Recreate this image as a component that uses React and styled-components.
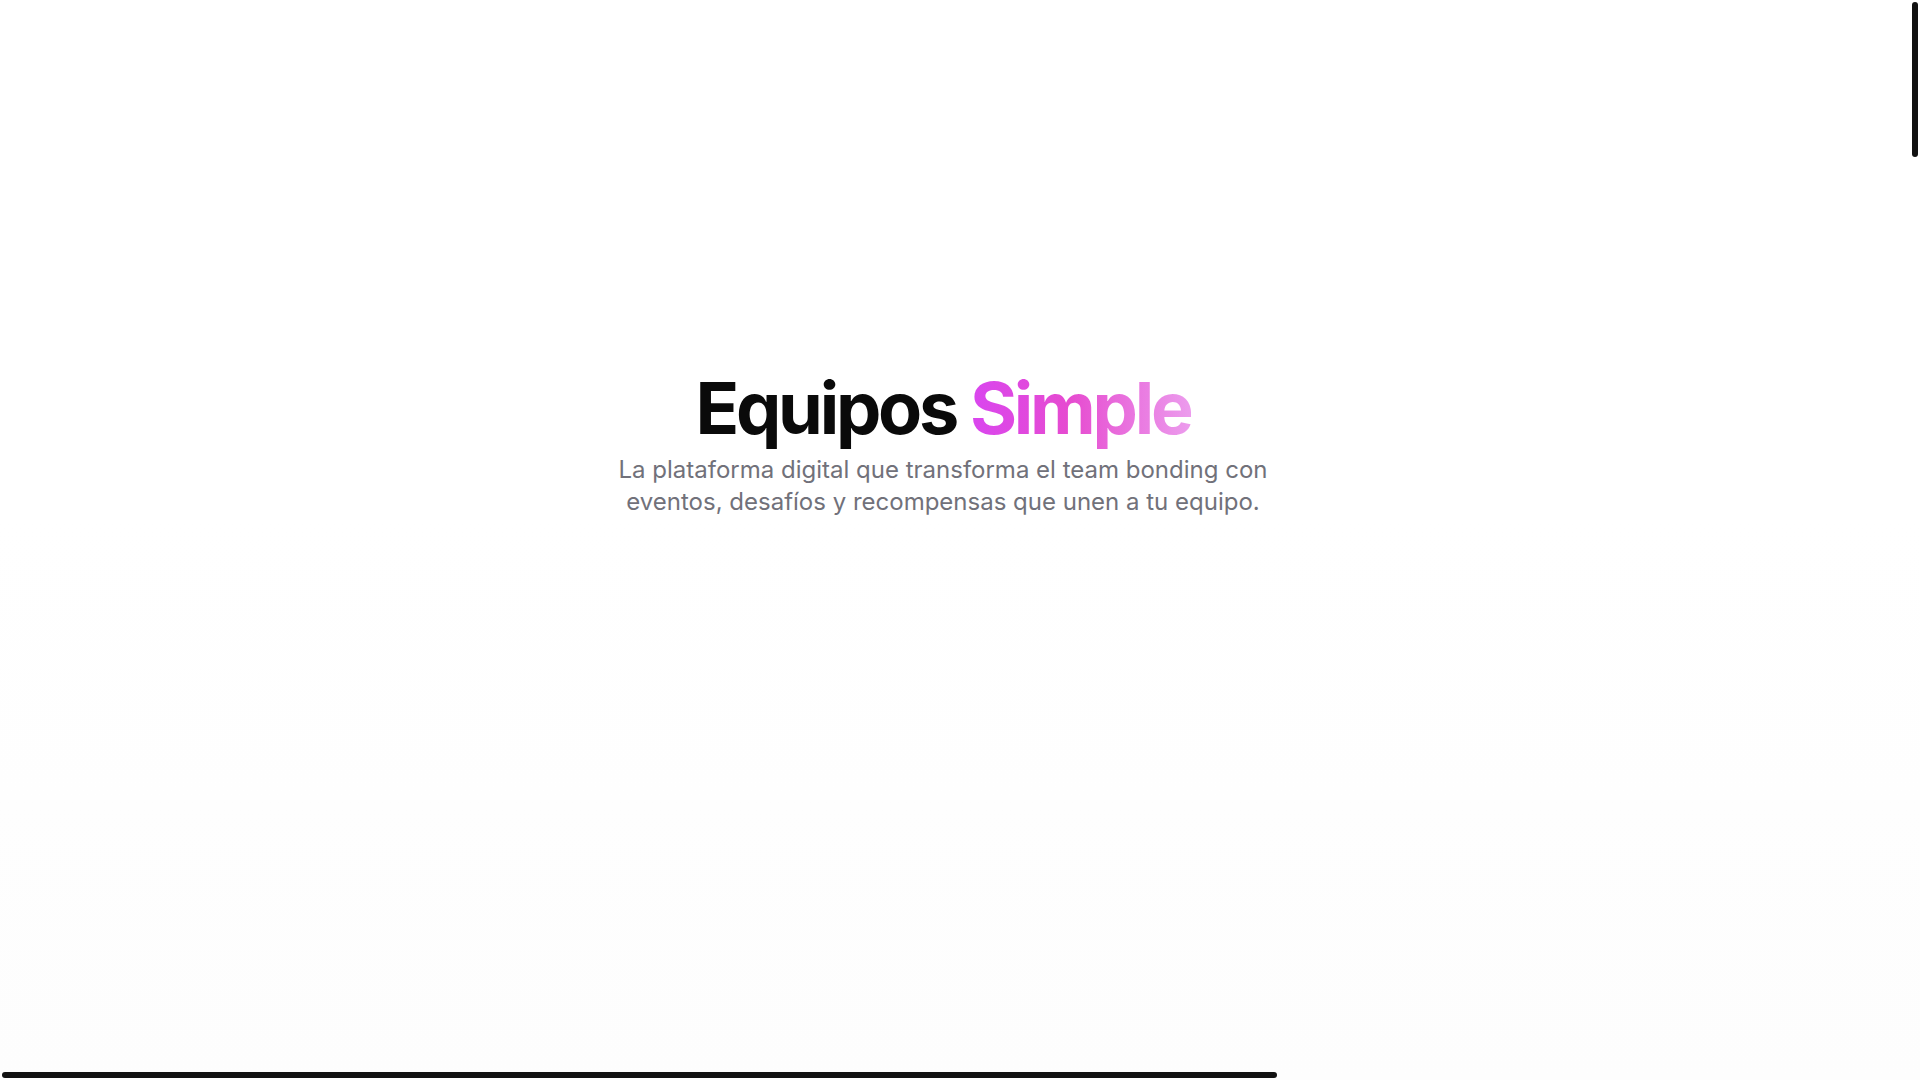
import React from "react";
import styled, { createGlobalStyle, css } from "styled-components";

const GlobalStyle = createGlobalStyle`
  html, body {
    margin: 0;
    padding: 0;
    background: #ffffff;
    font-family: Inter, "Noto Sans", sans-serif;
    -webkit-font-smoothing: antialiased;
    overflow: hidden;
  }
`;

function App() {
  return (
    <Page>
      <GlobalStyle />
      <Hero>
        <Title>
          Equipos <Accent>Simple</Accent>
        </Title>
        <Lead>
          La plataforma digital que transforma el team bonding con eventos,
          desafíos y recompensas que unen a tu equipo.
        </Lead>
      </Hero>
      {/* thin scroll thumbs drawn over the page */}
      <Thumb $vertical />
      <Thumb />
    </Page>
  );
}

const Page = styled.div`
  width: 100vw;
  height: 100vh;
  background: linear-gradient(180deg, #ffffff 0px, #ffffff 520px, #fdfdfd 1080px);
`;

const Hero = styled.section`
  width: 1886px;
  display: flex;
  flex-direction: column;
  align-items: center;
  text-align: center;
  padding-top: 372px;
`;

const Title = styled.h1`
  margin: 0;
  font-size: 72px;
  line-height: 1;
  font-weight: 700;
  letter-spacing: -0.045em;
  color: #0a0a0a;
`;

const Accent = styled.span`
  background: linear-gradient(90deg, #d946ef 0%, #e64bd0 45%, #ec9ced 100%);
  -webkit-background-clip: text;
  background-clip: text;
  color: transparent;
`;

const Lead = styled.p`
  margin: 10px 0 0;
  max-width: 672px;
  font-size: 24px;
  line-height: 32px;
  font-weight: 400;
  color: #71717a;
`;

const Thumb = styled.div`
  position: fixed;
  background: #111111;
  border-radius: 3px;
  ${(p) =>
    p.$vertical
      ? css`
          top: 2px;
          right: 2px;
          width: 6px;
          height: 155px;
        `
      : css`
          left: 2px;
          bottom: 2px;
          height: 6px;
          width: 1275px;
        `}
`;

export default App;
